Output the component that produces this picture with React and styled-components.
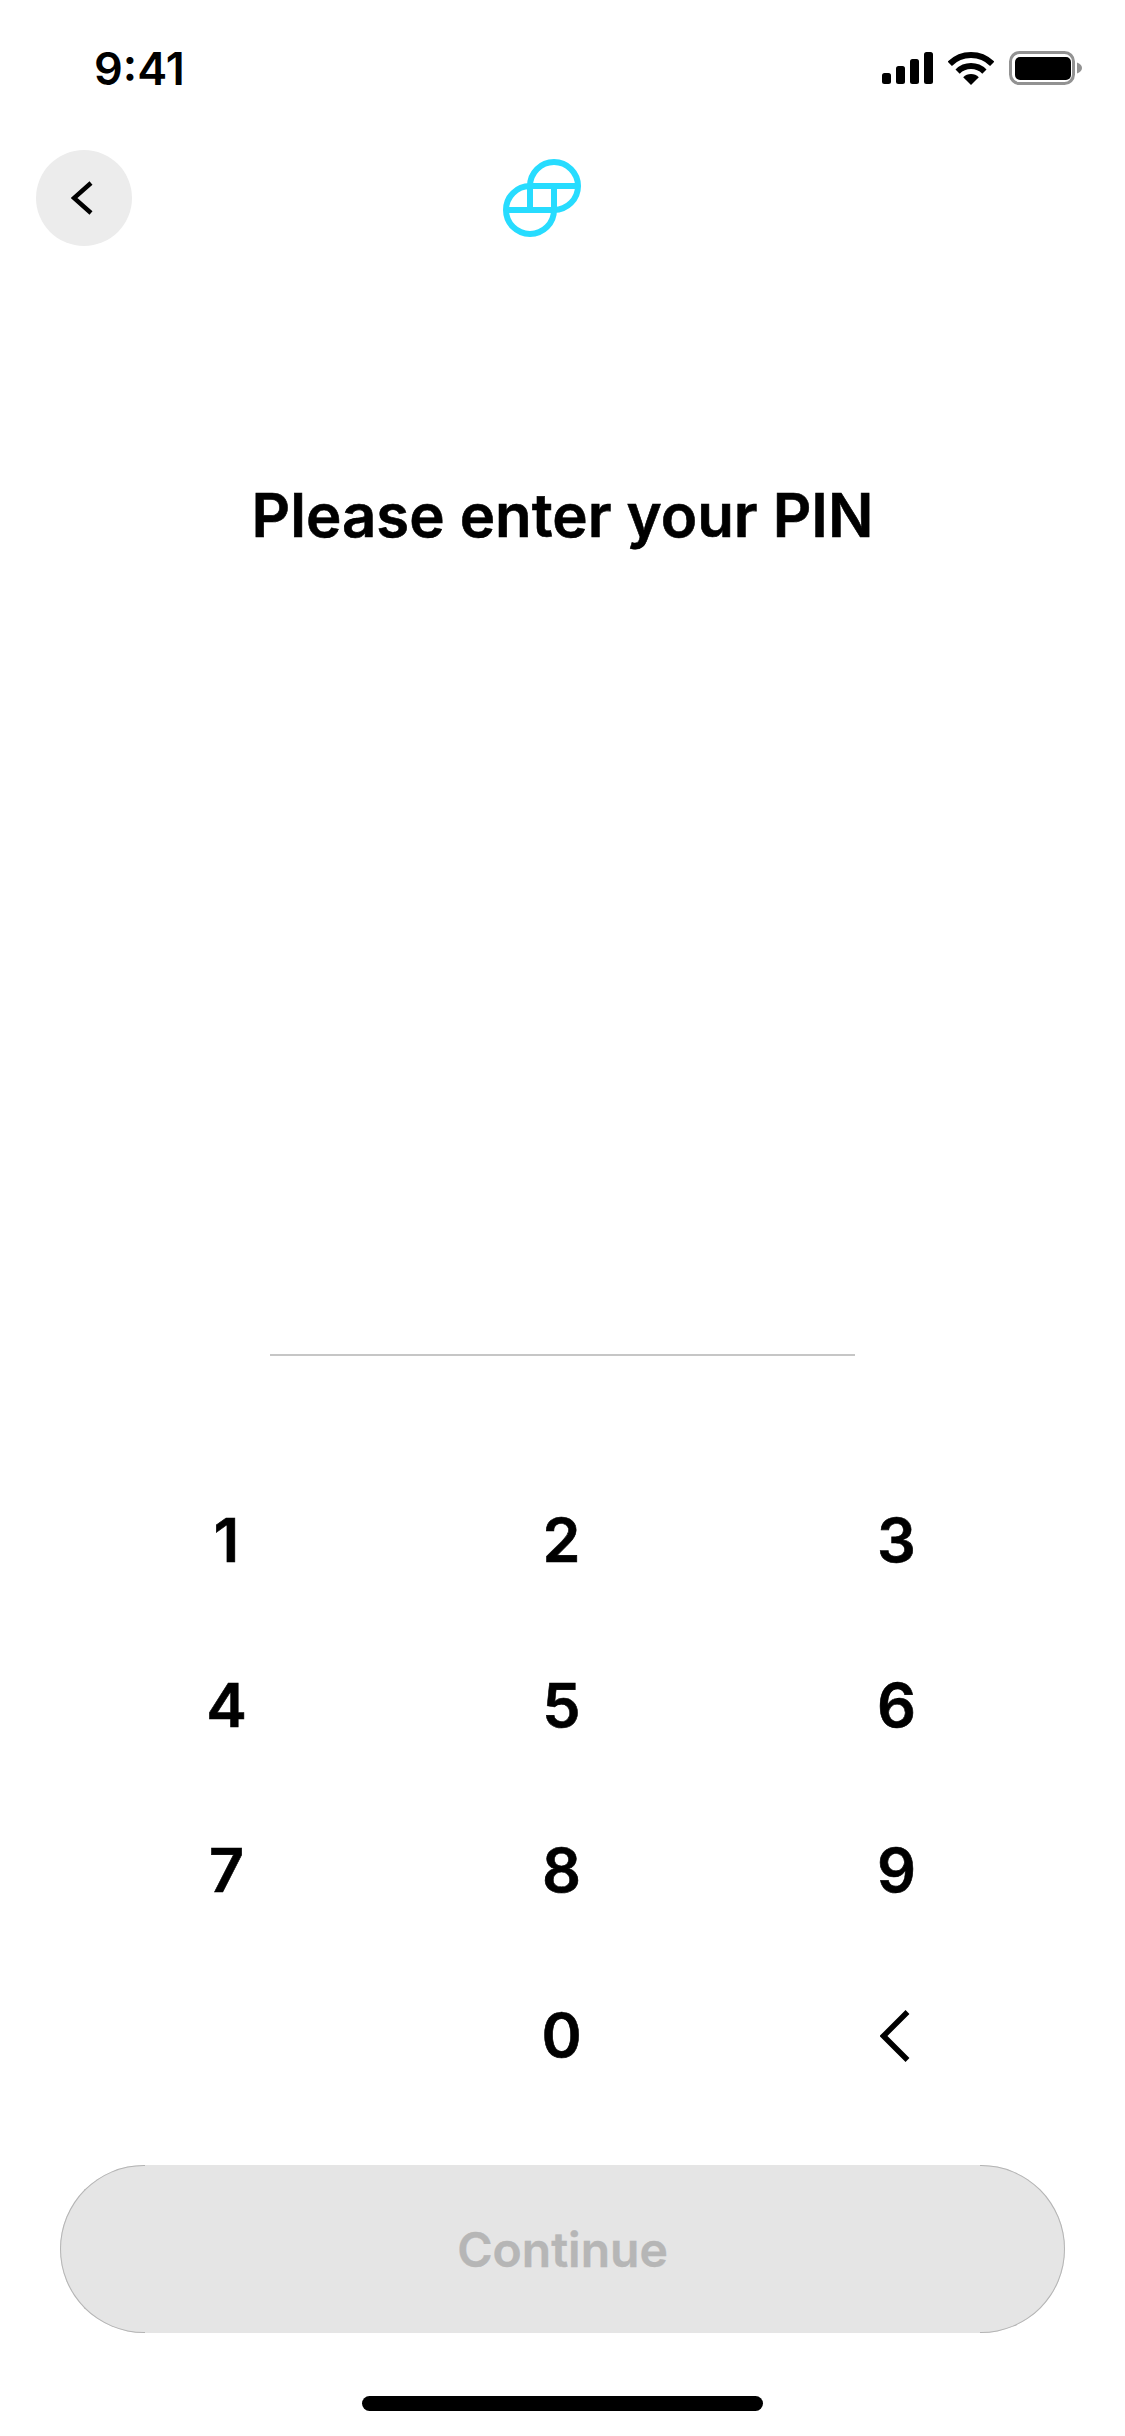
import React from "react";
import styled, { createGlobalStyle } from "styled-components";

const GlobalStyle = createGlobalStyle`
    html, body {
        margin: 0;
        padding: 0;
        background: #fff;
    }
    * {
        box-sizing: border-box;
    }
`;

const KEYS = ["1", "2", "3", "4", "5", "6", "7", "8", "9", "", "0", "back"];

const App = () => {
    return (
        <Screen>
            <GlobalStyle />
            <StatusBar>
                <Time>9:41</Time>
                <StatusIcons>
                    <svg width="51" height="32" viewBox="0 0 51 32">
                        <rect x="0" y="21" width="9" height="11" rx="2.5" fill="#000" />
                        <rect x="14" y="14" width="9" height="18" rx="2.5" fill="#000" />
                        <rect x="28" y="7" width="9" height="25" rx="2.5" fill="#000" />
                        <rect x="42" y="0" width="9" height="32" rx="2.5" fill="#000" />
                    </svg>
                    <svg width="46" height="33" viewBox="0 0 46 33">
                        <path d="M1.8 11.8A30 30 0 0 1 44.2 11.8" fill="none" stroke="#000" strokeWidth="6" />
                        <path d="M9.6 19.6A19 19 0 0 1 36.4 19.6" fill="none" stroke="#000" strokeWidth="6" />
                        <path d="M23 33L15.2 25.2A11 11 0 0 1 30.8 25.2Z" fill="#000" />
                    </svg>
                    <svg width="73" height="34" viewBox="0 0 73 34">
                        <rect x="1.5" y="1.5" width="63" height="31" rx="9" fill="none" stroke="#929292" strokeWidth="3" />
                        <rect x="6" y="6" width="56" height="23" rx="5" fill="#000" />
                        <path d="M68 11.5C71 12.5 73 14.5 73 17C73 19.5 71 21.5 68 22.5Z" fill="#929292" />
                    </svg>
                </StatusIcons>
            </StatusBar>
            <Nav>
                <BackCircle>
                    <svg width="22" height="34" viewBox="0 0 22 34">
                        <path d="M20 2L3 17L20 32" fill="none" stroke="#000" strokeWidth="4.5" />
                    </svg>
                </BackCircle>
                <svg width="78" height="78" viewBox="0 0 78 78">
                    <g fill="none" stroke="#27dcff" strokeWidth="6">
                        <path d="M27 27A24 24 0 0 1 75 27A24 24 0 0 1 51 51" />
                        <path d="M3 51A24 24 0 0 1 27 27" />
                        <path d="M3 51A24 24 0 0 0 51 51" />
                        <path d="M27 27H75M3 51H51M27 27V51M51 27V51" />
                    </g>
                </svg>
            </Nav>
            <Title>Please enter your PIN</Title>
            <PinLine />
            <Keypad>
                {KEYS.map((key, index) => (
                    <Key key={index}>
                        {key === "back" ? (
                            <BackspaceIcon width="30" height="52" viewBox="0 0 30 52">
                                <path d="M27.5 2L3.5 26L27.5 50" fill="none" stroke="#000" strokeWidth="5.5" />
                            </BackspaceIcon>
                        ) : (
                            key
                        )}
                    </Key>
                ))}
            </Keypad>
            <ContinueButton>Continue</ContinueButton>
            <HomeIndicator />
        </Screen>
    );
};

export default App;

const Screen = styled.div`
    width: 1125px;
    height: 2436px;
    background: #fff;
    color: #000;
    font-family: Inter, "Liberation Sans", sans-serif;
    display: flex;
    flex-direction: column;
    overflow: hidden;
`;
const StatusBar = styled.div`
    height: 136px;
    padding: 0 43px 0 94px;
    display: flex;
    align-items: center;
    justify-content: space-between;
`;
const Time = styled.div`
    font-size: 45px;
    font-weight: 600;
    line-height: 1;
`;
const StatusIcons = styled.div`
    display: flex;
    align-items: center;
    gap: 15px;
`;
const Nav = styled.div`
    margin-top: 14px;
    padding-left: 36px;
    display: flex;
    align-items: center;
    gap: 371px;
`;
const BackCircle = styled.div`
    width: 96px;
    height: 96px;
    border-radius: 50%;
    background: #ececec;
    padding-right: 4px;
    display: flex;
    align-items: center;
    justify-content: center;
`;
const Title = styled.h1`
    margin: 229px 0 0;
    height: 80px;
    font-size: 59.9px;
    font-weight: 600;
    -webkit-text-stroke: 0.6px #000;
    line-height: 80px;
    text-align: center;
`;
const PinLine = styled.div`
    width: 585px;
    height: 2px;
    margin: 799px 0 0 270px;
    background: #c6c6c6;
`;
const Keypad = styled.div`
    margin: 102px 0 0 59px;
    width: 1005px;
    display: grid;
    grid-template-columns: repeat(3, 335px);
    grid-auto-rows: 165px;
`;
const Key = styled.div`
    display: flex;
    align-items: center;
    justify-content: center;
    font-size: 61px;
    font-weight: 600;
    -webkit-text-stroke: 0.6px #000;
    line-height: 1;
`;
const BackspaceIcon = styled.svg`
    margin-right: 4px;
`;
const ContinueButton = styled.div`
    position: relative;
    width: 1005px;
    height: 168px;
    margin: 47px 0 0 60px;
    border-radius: 84px;
    background: #e5e5e5;
    color: #b6b6b6;
    font-size: 48px;
    font-weight: 600;
    -webkit-text-stroke: 0.4px #b6b6b6;
    display: flex;
    align-items: center;
    justify-content: center;
    &::before,
    &::after {
        content: "";
        position: absolute;
        top: 0;
        bottom: 0;
        width: 84px;
        border: 1px solid #b4b4b4;
    }
    &::before {
        left: 0;
        border-right: none;
        border-radius: 84px 0 0 84px;
    }
    &::after {
        right: 0;
        border-left: none;
        border-radius: 0 84px 84px 0;
    }
`;
const HomeIndicator = styled.div`
    width: 401px;
    height: 15px;
    margin: 63px 0 0 362px;
    border-radius: 8px;
    background: #000;
`;
